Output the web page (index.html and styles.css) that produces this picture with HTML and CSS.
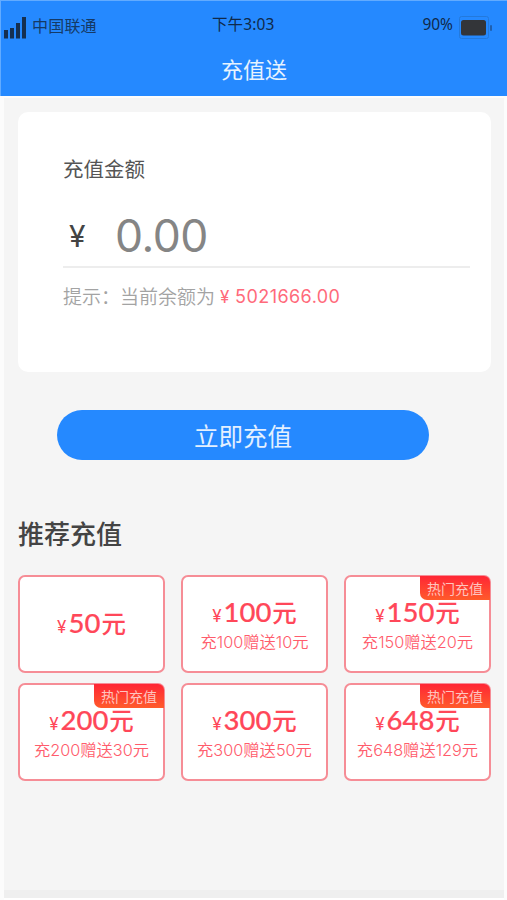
FILE: index.html
```html
<!DOCTYPE html>
<html lang="zh-CN">
<head>
<meta charset="utf-8">
<title>充值送</title>
<link rel="stylesheet" href="styles.css">
</head>
<body>
<header class="header">
  <div class="status">
    <div class="carrier">
      <svg class="signal" width="23" height="23" viewBox="0 0 23 23" fill="#152f50"><rect x="0" y="14" width="4" height="8.500"/><rect x="6" y="12" width="4" height="10.500"/><rect x="12" y="7" width="4" height="15.500"/><rect x="18" y="1" width="4" height="21.500"/></svg>
      <span class="carrier-name">中国联通</span>
    </div>
    <span class="time">下午3:03</span>
    <div class="power">
      <span class="percent">90%</span>
      <svg class="battery" width="34" height="24" viewBox="0 0 34 24"><rect x="0.500" y="0.500" width="29" height="22" rx="2" fill="none" stroke="#2379dc"/><rect x="2" y="4" width="25" height="15.500" rx="2.500" fill="#333539"/><rect x="31" y="9" width="2" height="6" rx="1" fill="#1f5fae"/></svg>
    </div>
  </div>
  <h1 class="title">充值送</h1>
</header>
<main class="page">
  <section class="card">
    <h2 class="card-title">充值金额</h2>
    <div class="amount"><span class="yen">¥</span><span class="value">0.00</span></div>
    <p class="hint"><span class="hint-label">提示：</span><span class="hint-text">当前余额为</span><span class="hint-yen">¥</span><span class="balance">5021666.00</span></p>
  </section>
  <button class="submit">立即充值</button>
  <h2 class="section-title">推荐充值</h2>
  <div class="plans">
    <div class="plan plan-plain"><p class="price"><small>¥</small><b>50</b><i>元</i></p></div>
    <div class="plan"><p class="price"><small>¥</small><b>100</b><i>元</i></p><p class="bonus">充100赠送10元</p></div>
    <div class="plan"><span class="tag">热门充值</span><p class="price"><small>¥</small><b>150</b><i>元</i></p><p class="bonus">充150赠送20元</p></div>
    <div class="plan"><span class="tag">热门充值</span><p class="price"><small>¥</small><b>200</b><i>元</i></p><p class="bonus">充200赠送30元</p></div>
    <div class="plan"><p class="price"><small>¥</small><b>300</b><i>元</i></p><p class="bonus">充300赠送50元</p></div>
    <div class="plan"><span class="tag">热门充值</span><p class="price"><small>¥</small><b>648</b><i>元</i></p><p class="bonus">充648赠送129元</p></div>
  </div>
</main>
</body>
</html>
```
FILE: styles.css
```css
* { box-sizing: border-box; margin: 0; padding: 0; }
body {
  width: 507px;
  height: 900px;
  overflow: hidden;
  background: #fcfcfc;
  font-family: Inter, "Noto Sans CJK SC", sans-serif;
  color: #444;
}
.header {
  height: 96px;
  background: #2589ff;
  border-top: 1px solid #62abff;
  border-left: 1px solid #62abff;
}
.status {
  display: grid;
  grid-template-columns: 208px auto 1fr;
  height: 48px;
  padding: 0 14px 0 3px;
  font-family: "Noto Sans", "Noto Sans CJK SC", sans-serif;
  font-weight: 400;
  color: #153a66;
}
.carrier, .power { display: flex; }
.signal { margin-top: 15px; }
.carrier-name { margin: 13px 0 0 5px; font-size: 16px; line-height: 24px; letter-spacing: 0.200px; }
.time { padding: 11px 0 0; font-size: 15.500px; line-height: 24px; letter-spacing: 0.100px; color: #10294a; }
.power { justify-content: flex-end; }
.percent { padding-top: 11px; font-size: 15.500px; line-height: 24px; margin-right: 6px; color: #10294a; }
.battery { margin-top: 15px; }
.title { text-align: center; font-size: 22px; font-weight: 400; line-height: 32px; color: #e6f2ff; margin-top: 5px; }
.page {
  height: 802px;
  margin: 2px 3px 0 4px;
  padding: 14px 13px 0 14px;
  background: #f5f5f5;
  border-bottom: 2px solid #fff;
  box-shadow: inset 0 -8px #efefef;
}
.card { height: 260px; padding: 41px 21px 0 45px; border-radius: 10px; background: #fff; }
.card-title { font-size: 20.500px; font-weight: 400; line-height: 34px; color: #555; }
.amount { display: flex; height: 81px; border-bottom: 2px solid #ededed; align-items: center; padding-top: 19px; }
.yen { width: 52px; padding-left: 6px; font-size: 30px; line-height: 60px; color: #444; }
.value { font-family: Inter, sans-serif; font-size: 44.500px; font-weight: 400; line-height: 60px; letter-spacing: -0.500px; color: #858585; }
.hint { display: flex; margin-top: 14px; font-size: 19px; line-height: 32px; font-weight: 350; color: #a3a3a3; }
.hint-label { width: 57px; white-space: nowrap; overflow: hidden; }
.hint-text { width: 100px; }
.hint-yen, .balance { color: #ff6a7b; font-weight: 400; }
.hint-yen { width: 15px; font-size: 17px; line-height: 30px; }
.balance { font-size: 18px; line-height: 30px; letter-spacing: 0.450px; }
.submit {
  display: block;
  width: 372px;
  height: 50px;
  margin: 38px 0 0 39px;
  border: 0;
  border-radius: 25px;
  background: #2589ff;
  font: 400 24.500px/52px "Noto Sans CJK SC", sans-serif;
  color: #e3f0ff;
}
.section-title { margin-top: 56px; font-size: 26px; line-height: 38px; font-weight: 500; color: #444; }
.plans { display: grid; grid-template-columns: repeat(3, 147px); grid-auto-rows: 98px; column-gap: 16px; row-gap: 10px; margin-top: 21px; }
.plan {
  position: relative;
  display: flex;
  flex-direction: column;
  align-items: center;
  padding-top: 17px;
  border: 2px solid #f68d96;
  border-radius: 7px;
  background: #fff;
  color: #ff4759;
}
.plan-plain { padding-top: 28px; }
.price { display: flex; align-items: baseline; height: 34px; line-height: 36px; }
.price small { margin-right: 2px; font-size: 17px; font-weight: 400; }
.price b { font-family: Lato, sans-serif; font-size: 27.500px; font-weight: 500; -webkit-text-stroke: 0.200px; }
.price i { margin-left: 1px; font-size: 24.500px; font-style: normal; font-weight: 500; }
.bonus { height: 26px; margin-top: 1px; font-size: 16.300px; line-height: 26px; font-weight: 350; white-space: nowrap; color: #ff5c6c; }
.tag {
  position: absolute;
  top: -1px;
  right: -1px;
  width: 70px;
  height: 24px;
  border-radius: 0 6px 0 7px;
  background: linear-gradient(#ff2635, #ff5b2b);
  font-size: 14px;
  line-height: 25px;
  text-align: center;
  color: #ffc4bf;
}
```
